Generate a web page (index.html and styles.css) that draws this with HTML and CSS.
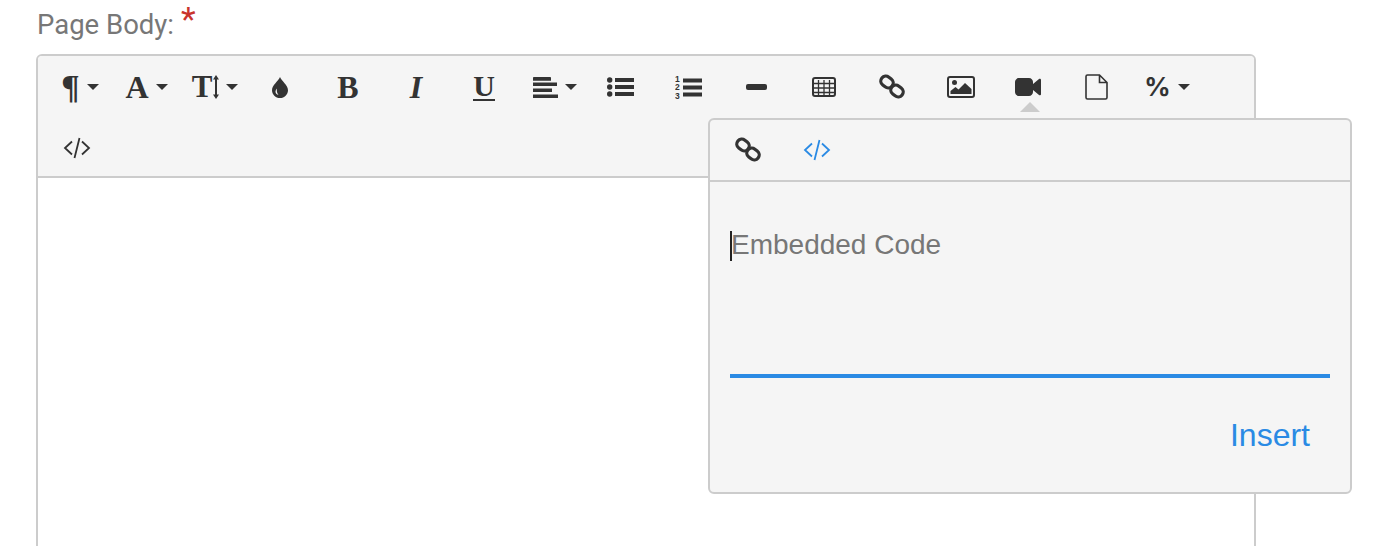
FILE: index.html
```html
<!DOCTYPE html>
<html lang="en">
<head>
  <meta charset="UTF-8" />
  <title>Page Body Editor</title>
  <link rel="stylesheet" href="styles.css">
</head>
<body>
  <svg class="defs" width="0" height="0">
    <symbol id="i-link" viewBox="0 0 26 26">
      <g fill="none" stroke="#333" stroke-width="3.200">
        <rect x="1.500" y="3" width="13" height="10" rx="5" transform="rotate(38 8 8)"/>
        <rect x="11.500" y="12" width="13" height="10" rx="5" transform="rotate(38 18 17)"/>
      </g>
    </symbol>
    <symbol id="i-code" viewBox="0 0 28 24">
      <path fill="none" stroke="currentColor" stroke-width="1.800" d="M9 5.500 2 12l7 6.500M19 5.500l7 6.500-7 6.500M16.500 2l-5 20"/>
    </symbol>
  </svg>

  <div class="field-label">
    <span>Page Body:</span><span class="required">*</span>
  </div>

  <div class="editor">
    <div class="toolbar">
      <button class="tool nudge-para"><span class="glyph para">¶</span><i class="caret"></i></button>
      <button class="tool nudge"><span class="glyph serif">A</span><i class="caret"></i></button>
      <button class="tool nudge-size">
        <span class="glyph serif size-t">T</span>
        <svg class="size-arrow" width="6" height="24" viewBox="0 0 6 24"><path fill="#333" d="M3 0 6 4.500H4V19.500H6L3 24 0 19.500H2V4.500H0z"/></svg>
        <i class="caret"></i>
      </button>
      <button class="tool">
        <svg width="16" height="21" viewBox="0 0 16 21"><path fill="#333" fill-rule="evenodd" d="M8 0c1.500 4 8 8 8 13.200C16 17.500 12.400 21 8 21s-8-3.500-8-7.800C0 8 6.500 4 8 0zM5 11.500c-1 1-1.500 2-1.500 3 0 1.800 1.200 3 3 3.300C4.900 16.200 4.500 14 5 11.500z"/></svg>
      </button>
      <button class="tool"><span class="glyph serif">B</span></button>
      <button class="tool"><span class="glyph serif ital">I</span></button>
      <button class="tool"><span class="glyph serif under">U</span></button>
      <button class="tool nudge">
        <svg width="25" height="21" viewBox="0 0 25 21"><path fill="#333" d="M0 1c0-.5.300-1 1-1h16c.7 0 1 .5 1 1v2.800H0zM0 5.600h24v3.500H0zM0 11.500h19V15H0zM0 17.500h25V21H0z"/></svg>
        <i class="caret"></i>
      </button>
      <button class="tool">
        <svg width="27" height="20" viewBox="0 0 27 20"><g fill="#333"><circle cx="2.700" cy="3" r="2.700"/><circle cx="2.700" cy="10" r="2.700"/><circle cx="2.700" cy="17" r="2.700"/><rect x="8" y="1" width="19" height="4"/><rect x="8" y="8" width="19" height="4"/><rect x="8" y="15" width="19" height="4"/></g></svg>
      </button>
      <button class="tool">
        <svg width="27" height="25" viewBox="0 0 27 25"><g fill="#333"><text class="ol-num" x="0" y="7">1</text><text class="ol-num" x="0" y="15">2</text><text class="ol-num" x="0" y="24">3</text><rect x="8" y="3.500" width="19" height="4"/><rect x="8" y="10.500" width="19" height="4"/><rect x="8" y="17.500" width="19" height="4"/></g></svg>
      </button>
      <button class="tool">
        <svg width="21" height="6" viewBox="0 0 21 6"><rect width="21" height="6" rx="2" fill="#333"/></svg>
      </button>
      <button class="tool">
        <svg width="24" height="20" viewBox="0 0 24 20"><rect x="1" y="1" width="22" height="18" rx="2" fill="none" stroke="#333" stroke-width="2"/><path fill="none" stroke="#333" stroke-width="1.300" d="M1 6.500h22M1 11h22M1 15.500h22M6.500 3v16M12 3v16M17.500 3v16"/></svg>
      </button>
      <button class="tool"><svg width="26" height="26"><use href="#i-link"/></svg></button>
      <button class="tool">
        <svg class="shift-right" width="28" height="22" viewBox="0 0 28 22"><rect x="1" y="1" width="26" height="20" rx="2" fill="none" stroke="#333" stroke-width="2"/><circle cx="7.500" cy="6.500" r="2.500" fill="#333"/><path fill="#333" d="M3.500 18v-3l5-4 3 2.500L18 7l6.500 6v5z"/></svg>
      </button>
      <button class="tool">
        <svg width="26" height="18" viewBox="0 0 26 18"><path fill="#333" d="M4 0h10c2.200 0 4 1.800 4 4v2l6-5c.8-.6 2-.1 2 .8v14.400c0 .9-1.200 1.400-2 .8l-6-5v2c0 2.200-1.800 4-4 4H4c-2.200 0-4-1.800-4-4V4c0-2.200 1.800-4 4-4z"/></svg>
      </button>
      <button class="tool">
        <svg width="23" height="26" viewBox="0 0 23 26"><path fill="none" stroke="#333" stroke-width="1.600" d="M2.500 1h12l7.500 7.500V23.500c0 .8-.7 1.500-1.500 1.500h-18c-.8 0-1.500-.7-1.500-1.500V2.500c0-.8.700-1.500 1.500-1.500zM14.500 1v7.500H22"/></svg>
      </button>
      <button class="tool nudge-percent"><span class="glyph percent">%</span><i class="caret"></i></button>
      <button class="tool code-tool"><svg class="shift-right" width="28" height="24"><use href="#i-code"/></svg></button>
    </div>

    <div class="edit-area"></div>

    <div class="popup">
      <div class="popup-arrow"></div>
      <div class="popup-tabs">
        <button class="tool"><svg width="26" height="26"><use href="#i-link"/></svg></button>
        <button class="tool active"><svg class="shift-right" width="28" height="24"><use href="#i-code"/></svg></button>
      </div>
      <div class="popup-body">
        <div class="code-input">
          <span class="text-caret"></span>
          <span class="placeholder">Embedded Code</span>
        </div>
        <div class="popup-actions">
          <button class="insert">Insert</button>
        </div>
      </div>
    </div>
  </div>
</body>
</html>
```

FILE: styles.css
```css
html, body {
  height: 100%;
  overflow: hidden;
}
body {
  margin: 0;
  padding: 0 0 0 36px;
  background-color: #fff;
  font-family: 'Liberation Sans', Arial, sans-serif;
  color: #333;
}
.defs {
  position: absolute;
}
.field-label {
  display: flex;
  height: 54px;
  padding: 10px 0 0 1px;
  box-sizing: border-box;
  font-family: Roboto, sans-serif;
  font-size: 27.500px;
  line-height: 30px;
  color: #777;
}
.required {
  margin: -6px 0 0 7px;
  font-size: 34px;
  line-height: 30px;
  color: #c9342c;
}
.editor {
  position: relative;
  width: 1220px;
  height: 600px;
  box-sizing: border-box;
  border: 2px solid #ccc;
  border-radius: 6px;
  background-color: #fff;
}
.toolbar {
  display: flex;
  flex-wrap: wrap;
  box-sizing: border-box;
  height: 122px;
  padding: 1px 0 0 4px;
  align-content: flex-start;
  background-color: #f5f5f5;
  border-bottom: 2px solid #ccc;
  border-radius: 4px 4px 0 0;
}
.tool {
  display: flex;
  align-items: center;
  justify-content: center;
  width: 68px;
  height: 60px;
  padding: 0;
  border: none;
  background: none;
  color: #333;
  cursor: pointer;
}
.nudge {
  padding-left: 5px;
}
.nudge-para {
  padding-left: 8px;
}
.nudge-size {
  padding-left: 6px;
}
.nudge-percent {
  padding-left: 6px;
}
.shift-right {
  margin-left: 2px;
}
.code-tool {
  margin-top: 1px;
}
.glyph {
  font-size: 32px;
  line-height: 32px;
  color: #333;
}
.serif {
  font-family: 'Liberation Serif', serif;
  font-weight: bold;
}
.para {
  font-family: 'Liberation Serif', serif;
  font-weight: bold;
  font-size: 34px;
}
.ital {
  font-style: italic;
}
.under {
  font-size: 30px;
  line-height: 26px;
  border-bottom: 2px solid #333;
}
.percent {
  font-family: Inter, sans-serif;
  font-weight: bold;
  font-size: 26px;
}
.size-t {
  font-size: 31px;
}
.size-arrow {
  margin-left: 1px;
}
.caret {
  width: 0;
  height: 0;
  margin-left: 7px;
  border-left: 6px solid transparent;
  border-right: 6px solid transparent;
  border-top: 6px solid #333;
}
.ol-num {
  font-family: 'Liberation Sans', sans-serif;
  font-weight: bold;
  font-size: 8.500px;
}
.popup {
  position: absolute;
  left: 670px;
  top: 62px;
  width: 644px;
  height: 376px;
  box-sizing: border-box;
  border: 2px solid #ccc;
  border-radius: 6px;
  background-color: #f5f5f5;
}
.popup-arrow {
  position: absolute;
  left: 310px;
  top: -18px;
  width: 0;
  height: 0;
  border-left: 10px solid transparent;
  border-right: 10px solid transparent;
  border-bottom: 10px solid #ccc;
}
.popup-tabs {
  display: flex;
  box-sizing: border-box;
  height: 62px;
  padding-left: 4px;
  border-bottom: 2px solid #ccc;
}
.tool.active {
  color: #2a8ae4;
}
.popup-body {
  display: flex;
  flex-direction: column;
  padding: 48px 20px 0;
}
.code-input {
  display: flex;
  height: 148px;
  box-sizing: border-box;
  align-items: flex-start;
  border-bottom: 4px solid #2a8ae4;
}
.text-caret {
  width: 2px;
  height: 30px;
  margin-top: 1px;
  background-color: #222;
}
.placeholder {
  margin-left: -1px;
  margin-top: -2px;
  font-size: 28px;
  line-height: 34px;
  color: #777;
}
.popup-actions {
  display: flex;
  justify-content: flex-end;
  padding: 37px 20px 0 0;
}
.insert {
  padding: 0;
  border: none;
  background: none;
  font-family: 'Liberation Sans', sans-serif;
  font-size: 32px;
  line-height: 40px;
  color: #2a8ae4;
  cursor: pointer;
}
```
